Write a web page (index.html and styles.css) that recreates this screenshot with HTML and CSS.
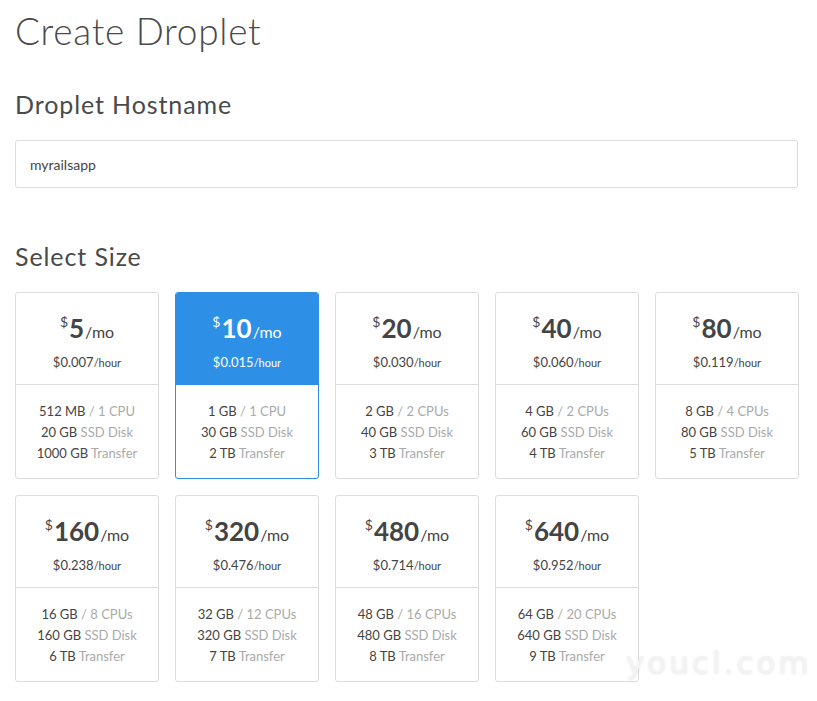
FILE: index.html
```html
<!DOCTYPE html>
<html>
<head>
<meta charset="utf-8">
<link rel="stylesheet" href="styles.css">
</head>
<body>
<div class="page">
  <h1 class="title">Create Droplet</h1>
  <h2 class="section">Droplet Hostname</h2>
  <div class="input">myrailsapp</div>
  <h2 class="section size-title">Select Size</h2>
  <div class="grid">
    <div class="card">
      <div class="top"><div class="price"><span class="cur">$</span><span class="amt">5</span><span class="mo">/mo</span></div><div class="hour">$0.007<span class="hu">/hour</span></div></div>
      <div class="specs"><div>512 MB <span class="l">/ 1 CPU</span></div><div>20 GB <span class="l">SSD Disk</span></div><div>1000 GB <span class="l">Transfer</span></div></div>
    </div>
    <div class="card selected">
      <div class="top"><div class="price"><span class="cur">$</span><span class="amt">10</span><span class="mo">/mo</span></div><div class="hour">$0.015<span class="hu">/hour</span></div></div>
      <div class="specs"><div>1 GB <span class="l">/ 1 CPU</span></div><div>30 GB <span class="l">SSD Disk</span></div><div>2 TB <span class="l">Transfer</span></div></div>
    </div>
    <div class="card">
      <div class="top"><div class="price"><span class="cur">$</span><span class="amt">20</span><span class="mo">/mo</span></div><div class="hour">$0.030<span class="hu">/hour</span></div></div>
      <div class="specs"><div>2 GB <span class="l">/ 2 CPUs</span></div><div>40 GB <span class="l">SSD Disk</span></div><div>3 TB <span class="l">Transfer</span></div></div>
    </div>
    <div class="card">
      <div class="top"><div class="price"><span class="cur">$</span><span class="amt">40</span><span class="mo">/mo</span></div><div class="hour">$0.060<span class="hu">/hour</span></div></div>
      <div class="specs"><div>4 GB <span class="l">/ 2 CPUs</span></div><div>60 GB <span class="l">SSD Disk</span></div><div>4 TB <span class="l">Transfer</span></div></div>
    </div>
    <div class="card">
      <div class="top"><div class="price"><span class="cur">$</span><span class="amt">80</span><span class="mo">/mo</span></div><div class="hour">$0.119<span class="hu">/hour</span></div></div>
      <div class="specs"><div>8 GB <span class="l">/ 4 CPUs</span></div><div>80 GB <span class="l">SSD Disk</span></div><div>5 TB <span class="l">Transfer</span></div></div>
    </div>
    <div class="card">
      <div class="top"><div class="price"><span class="cur">$</span><span class="amt">160</span><span class="mo">/mo</span></div><div class="hour">$0.238<span class="hu">/hour</span></div></div>
      <div class="specs"><div>16 GB <span class="l">/ 8 CPUs</span></div><div>160 GB <span class="l">SSD Disk</span></div><div>6 TB <span class="l">Transfer</span></div></div>
    </div>
    <div class="card">
      <div class="top"><div class="price"><span class="cur">$</span><span class="amt">320</span><span class="mo">/mo</span></div><div class="hour">$0.476<span class="hu">/hour</span></div></div>
      <div class="specs"><div>32 GB <span class="l">/ 12 CPUs</span></div><div>320 GB <span class="l">SSD Disk</span></div><div>7 TB <span class="l">Transfer</span></div></div>
    </div>
    <div class="card">
      <div class="top"><div class="price"><span class="cur">$</span><span class="amt">480</span><span class="mo">/mo</span></div><div class="hour">$0.714<span class="hu">/hour</span></div></div>
      <div class="specs"><div>48 GB <span class="l">/ 16 CPUs</span></div><div>480 GB <span class="l">SSD Disk</span></div><div>8 TB <span class="l">Transfer</span></div></div>
    </div>
    <div class="card">
      <div class="top"><div class="price"><span class="cur">$</span><span class="amt">640</span><span class="mo">/mo</span></div><div class="hour">$0.952<span class="hu">/hour</span></div></div>
      <div class="specs"><div>64 GB <span class="l">/ 20 CPUs</span></div><div>640 GB <span class="l">SSD Disk</span></div><div>9 TB <span class="l">Transfer</span></div></div>
    </div>
  </div>
  <div class="watermark">youcl.com</div>
</div>
</body>
</html>
```
FILE: styles.css
```css
* { box-sizing: border-box; }
html, body { margin: 0; padding: 0; background: #fff; }
body {
  font-family: "Lato", "Open Sans", sans-serif;
  color: #444;
}
.page {
  position: relative;
  padding: 0 19px 0 15px;
  height: 701px;
  overflow: hidden;
}
.title {
  margin: 0;
  padding-top: 9px;
  font-size: 37px;
  line-height: 44px;
  font-weight: 300;
  color: #4a4a4a;
  letter-spacing: 0.7px;
}
.section {
  margin: 0;
  font-size: 25px;
  line-height: 30px;
  font-weight: 400;
  color: #4a4a4a;
  letter-spacing: 0.9px;
}
.title + .section { margin-top: 36px; }
.input {
  margin-top: 21px;
  height: 48px;
  border: 1px solid #dcdcdc;
  border-radius: 3px;
  padding: 0 14px;
  display: flex;
  align-items: center;
  font-size: 14px;
  color: #444;
}
.size-title { margin-top: 53px; }
.grid {
  margin-top: 21px;
  display: grid;
  grid-template-columns: repeat(5, 144px);
  column-gap: 16px;
  row-gap: 16px;
}
.card {
  height: 187px;
  border: 1px solid #dddddd;
  border-radius: 3px;
  display: flex;
  flex-direction: column;
  overflow: hidden;
  text-align: center;
}
.top {
  height: 92px;
  border-bottom: 1px solid #dddddd;
  padding-top: 19px;
}
.price {
  height: 32px;
  line-height: 32px;
  color: #444;
}
.cur {
  font-size: 14px;
  vertical-align: top;
  line-height: 18px;
  position: relative;
  top: 1px;
  margin-right: 1px;
}
.amt {
  font-size: 26px;
  font-weight: 700;
}
.mo {
  font-size: 16px;
  margin-left: 1px;
}
.hour {
  margin-top: 9px;
  font-size: 13px;
  line-height: 18px;
  color: #444;
}
.hu { font-size: 11px; }
.specs {
  padding-top: 16px;
  font-size: 13px;
  line-height: 21px;
  color: #444;
}
.l { color: #aaaaaa; }
.selected { border-color: #2d8fe6; }
.selected .top {
  background: #2d8fe6;
  border-bottom-color: #2d8fe6;
}
.selected .top, .selected .price, .selected .hour { color: #fff; }
.watermark {
  position: absolute;
  left: 626px;
  top: 644px;
  font-family: "DejaVu Sans", sans-serif;
  font-size: 31px;
  letter-spacing: 3px;
  color: #f3f3f3;
  text-shadow: 0 1px 3px rgba(0,0,0,0.10);
}
```
